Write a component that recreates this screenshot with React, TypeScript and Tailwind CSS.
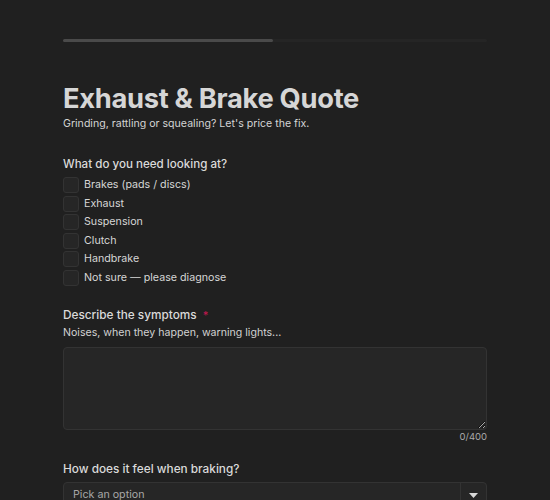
import { useState } from "react";

const options = [
  "Brakes (pads / discs)",
  "Exhaust",
  "Suspension",
  "Clutch",
  "Handbrake",
  "Not sure — please diagnose",
];

export default function App() {
  const [checked, setChecked] = useState<string[]>([]);
  const [text, setText] = useState("");

  const toggle = (o: string) =>
    setChecked((c) => (c.includes(o) ? c.filter((x) => x !== o) : [...c, o]));

  return (
    <div
      className="min-h-screen bg-[#202020] text-[#d8d8d8]"
      style={{ fontFamily: "Inter, 'Noto Sans', sans-serif" }}
    >
      <div className="mx-auto w-[424px] pt-[39px]">
        {/* progress */}
        <div className="h-[3px] w-full rounded-full bg-[#252525]">
          <div className="h-full w-[210px] rounded-full bg-[#4a4a4a]" />
        </div>

        <h1 className="mt-[41px] text-[27.3px] font-bold leading-[32px] tracking-[-0.3px] text-[#d6d6d6]">
          Exhaust &amp; Brake Quote
        </h1>
        <p className="mt-[1px] text-[10.6px] leading-[16px] text-[#d4d4d4]">
          Grinding, rattling or squealing? Let's price the fix.
        </p>

        <div className="mt-[24px]">
          <div className="text-[11.6px] font-medium leading-[16px] text-[#dadada]">
            What do you need looking at?
          </div>
          <div className="mt-[4px] flex flex-col">
            {options.map((o) => (
              <label
                key={o}
                className="flex h-[18.5px] cursor-pointer items-center gap-[5px]"
              >
                <span
                  onClick={() => toggle(o)}
                  className={`h-[16px] w-[16px] rounded-[3px] border border-[#333] ${
                    checked.includes(o) ? "bg-[#555]" : "bg-[#262626]"
                  }`}
                />
                <span className="text-[10.7px] text-[#d6d6d6]">{o}</span>
              </label>
            ))}
          </div>
        </div>

        <div className="mt-[20px]">
          <div className="flex items-center gap-[6px] text-[11.8px] font-medium leading-[16px] text-[#dadada]">
            Describe the symptoms
            <span className="text-[11px] text-[#c0184f]">*</span>
          </div>
          <div className="mt-[2px] text-[10.6px] leading-[16px] text-[#d2d2d2]">
            Noises, when they happen, warning lights...
          </div>
          <textarea
            value={text}
            maxLength={400}
            onChange={(e) => setText(e.target.value)}
            className="mt-[6px] block h-[83px] w-full rounded-[4px] border border-[#333] bg-[#262626] p-2 text-[11px] text-[#ddd] outline-none"
          />
          <div className="mt-[1px] text-right text-[9.5px] leading-[12px] text-[#aaa]">
            {text.length}/400
          </div>
        </div>

        <div className="mt-[18px]">
          <div className="text-[11.8px] font-medium leading-[16px] text-[#dadada]">
            How does it feel when braking?
          </div>
          <div className="mt-[5px] flex h-[32px] w-full items-stretch rounded-[4px] border border-[#333] bg-[#262626]">
            <div className="flex flex-1 items-start pl-[9px] pt-[4px] text-[10.7px] text-[#a8a8a8]">
              Pick an option
            </div>
            <div className="flex w-[26px] items-start justify-center border-l border-[#333] pt-[10px]">
              <svg width="9" height="5" viewBox="0 0 9 5">
                <path d="M0 0h9L4.5 5z" fill="#d8d8d8" />
              </svg>
            </div>
          </div>
        </div>
      </div>
    </div>
  );
}
